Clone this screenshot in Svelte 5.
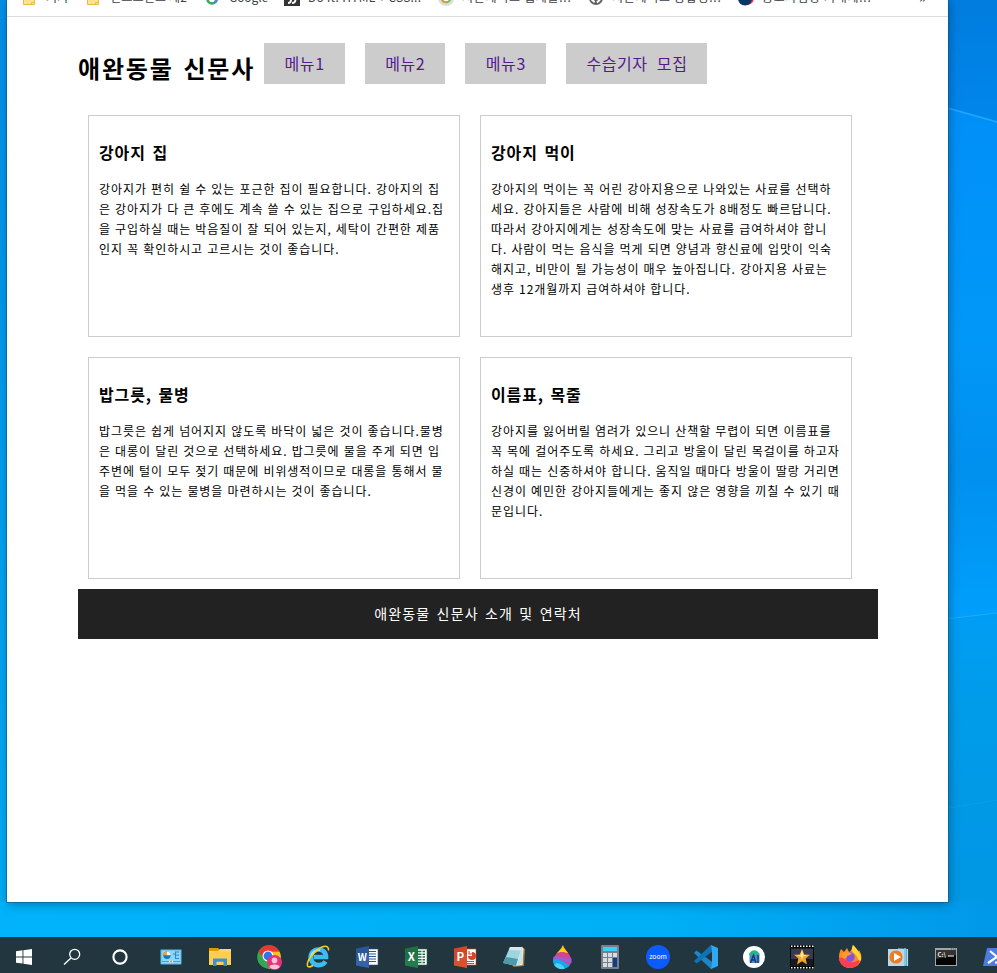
<script>
  const bookmarks = [
    { x: 22, icon: 'folder', text: '거기', w: 64, gap: 0 },
    { x: 86, icon: 'folder', text: '인스프린트 제2', w: 119, gap: 0.2 },
    { x: 205, icon: 'google', text: 'Google', w: 79, gap: -0.1 },
    { x: 284, icon: 'doit', text: 'Do it! HTML + CSS...', w: 154, gap: 0.25 },
    { x: 438, icon: 'ring', text: '시근제이스 웹제를...', w: 150, gap: 0.7 },
    { x: 588, icon: 'globe', text: '시근제이스 종합정...', w: 150, gap: 0.7 },
    { x: 738, icon: 'navy', text: '중고사업장 거래제...', w: 160, gap: 0.7 }
  ];
  const menus = ['메뉴1', '메뉴2', '메뉴3', '수습기자 모집'];
  const cards = [
    {
      title: '강아지 집',
      lines: [
        '강아지가 편히 쉴 수 있는 포근한 집이 필요합니다. 강아지의 집',
        '은 강아지가 다 큰 후에도 계속 쓸 수 있는 집으로 구입하세요.집',
        '을 구입하실 때는 박음질이 잘 되어 있는지, 세탁이 간편한 제품',
        '인지 꼭 확인하시고 고르시는 것이 좋습니다.'
      ]
    },
    {
      title: '강아지 먹이',
      lines: [
        '강아지의 먹이는 꼭 어린 강아지용으로 나와있는 사료를 선택하',
        '세요. 강아지들은 사람에 비해 성장속도가 8배정도 빠르답니다.',
        '따라서 강아지에게는 성장속도에 맞는 사료를 급여하셔야 합니',
        '다. 사람이 먹는 음식을 먹게 되면 양념과 향신료에 입맛이 익숙',
        '해지고, 비만이 될 가능성이 매우 높아집니다. 강아지용 사료는',
        '생후 12개월까지 급여하셔야 합니다.'
      ]
    },
    {
      title: '밥그릇, 물병',
      lines: [
        '밥그릇은 쉽게 넘어지지 않도록 바닥이 넓은 것이 좋습니다.물병',
        '은 대롱이 달린 것으로 선택하세요. 밥그릇에 물을 주게 되면 입',
        '주변에 털이 모두 젖기 때문에 비위생적이므로 대롱을 통해서 물',
        '을 먹을 수 있는 물병을 마련하시는 것이 좋습니다.'
      ]
    },
    {
      title: '이름표, 목줄',
      lines: [
        '강아지를 잃어버릴 염려가 있으니 산책할 무렵이 되면 이름표를',
        '꼭 목에 걸어주도록 하세요. 그리고 방울이 달린 목걸이를 하고자',
        '하실 때는 신중하셔야 합니다. 움직일 때마다 방울이 딸랑 거리면',
        '신경이 예민한 강아지들에게는 좋지 않은 영향을 끼칠 수 있기 때',
        '문입니다.'
      ]
    }
  ];
  const system = ['windows', 'search', 'cortana'];
  const wide = ['panel', 'explorer', 'chrome', 'ie', 'word', 'excel', 'ppt', 'notepad'];
  const narrow = ['paint', 'calc', 'zoom', 'vscode', 'android', 'movie', 'firefox', 'player', 'cmd', 'powershell'];
</script>

{#snippet office(color, dark, letter)}
  <rect x="0" y="-8" width="11" height="16" fill="#fff" stroke={color} stroke-width=".6" />
  {#if letter === 'W'}
    <path d="M1-5.5H9M1-3H9M1-.5H9M1 2H9M1 4.5H9" stroke={color} stroke-width="1.1" />
  {:else if letter === 'X'}
    <path d="M1-5.5H9M1-2.8H9M1 0H9M1 2.8H9M1 5.5H9" stroke={color} stroke-width="1.5" stroke-dasharray="4.5 1" />
  {:else}
    <path d="M3-1a4 4 0 1 0 4-4V-1z" fill={color} />
    <path d="M4-6v3H8.5M1 4.5H9M1 6.5H9" fill="none" stroke={color} stroke-width="1.1" />
  {/if}
  <path d="M-11-8.5L2-11V11L-11 8.5z" fill={color} />
  <path d="M-11 3L2-3V11L-11 8.5z" fill={dark} opacity=".3" />
  <text x="-4.7" y="4" text-anchor="middle" font-size={letter === 'W' ? 10 : 11.5} font-weight="700" fill="#fff">{letter}</text>
{/snippet}

{#snippet glyph(name)}
  <svg class="glyph" width="30" height="36" viewBox="-15 -20 30 36">
    {#if name === 'windows'}
      <path d="M-8-5.7L-1.5-6.7V-.6H-8zM-.6-6.8L8-8V-.6H-.6zM-8 .4H-1.5V6.6L-8 5.7zM-.6 .4H8V8L-.6 6.8z" fill="#fff" />
    {:else if name === 'search'}
      <circle cx="2.7" cy="-2.7" r="5" fill="none" stroke="#fff" stroke-width="1.3" />
      <path d="M-1 1L-8 7.5" stroke="#fff" stroke-width="1.4" />
    {:else if name === 'cortana'}
      <circle r="6.6" fill="none" stroke="#fff" stroke-width="2.1" />
    {:else if name === 'panel'}
      <rect x="-10.5" y="-7.5" width="21" height="15" rx=".8" fill="#5cb8ea" />
      <rect x="-9.5" y="-6.5" width="19" height="13" fill="#8fd5f4" />
      <circle cx="-4" cy="-1.7" r="3.7" fill="#1478bd" />
      <path d="M-4-1.7V-5.4A3.7 3.7 0 0 1-.3-1.7z" fill="#fff" />
      <path d="M-4-1.7H-7.7A3.7 3.7 0 0 1-4-5.4z" fill="#f5a623" />
      <path d="M2-3H4.5M4.5-5.5V2M4.5-5H8M4.5-1.8H8M4.5 1.5H8" fill="none" stroke="#2b8ad2" />
      <path d="M-9 4.5H9" stroke="#4aa2d9" />
      <path d="M-2 4.5H2" stroke="#fff" stroke-width="1.5" />
      <circle cx="0" cy="4.5" r="1.1" fill="#ee9b15" />
    {:else if name === 'explorer'}
      <path d="M-11-9H-2L0-7V-3H-11z" fill="#df9b00" />
      <path d="M-11-6H-2L0-8H11V8H-11z" fill="#ffd764" />
      <path d="M-11-5.5H11V8H-11z" fill="#ffce50" />
      <path d="M-7 9V1.5H7V9H3.5V4.7H-3.5V9z" fill="#3b91d7" />
    {:else if name === 'chrome'}
      <circle r="11.8" fill="#32a852" />
      <path d="M0-5.5H10.4A11.8 11.8 0 0 1-.5 11.8L5 2z" fill="#fbc116" />
      <path d="M-10.4-5.6A11.8 11.8 0 0 1 10.5-5.5H0L-5 2z" fill="#e8392f" />
      <circle cx="-1" cy="-1" r="5.5" fill="#fff" />
      <circle cx="-1" cy="-1" r="4.4" fill="#2f75e8" />
      <circle cx="5.5" cy="5.5" r="7.5" fill="#e8317b" />
      <circle cx="5.5" cy="3.4" r="2.8" fill="#fbc3d8" />
      <path d="M.3 10C1.5 6.8 9.5 6.8 10.8 10A7.3 7.3 0 0 1 .3 10" fill="#fbc3d8" />
    {:else if name === 'ie'}
      <path d="M7.5 4.5C4.5 9.2-2.5 9.3-5.8 5C-8.8 .8-7.4-5-2.2-7C3.5-9 8 -4.8 8 0H-4.5" fill="none" stroke="#3dbcf0" stroke-width="4.6" />
      <path d="M-7-1C-6-5-2-7.6 2-6.8" fill="none" stroke="#a9e9fc" stroke-width="1.8" />
      <path d="M10.5-6.5C11-9.5 9-12 4-10C-3-7-12 4-10.5 9C-9.8 10.5-7.5 10-5 8.5" fill="none" stroke="#f5ce24" stroke-width="1.6" />
    {:else if name === 'word'}
      {@render office('#2b5797', '#4e82cf', 'W')}
    {:else if name === 'excel'}
      {@render office('#1e7145', '#33945c', 'X')}
    {:else if name === 'ppt'}
      {@render office('#d24726', '#f06a45', 'P')}
    {:else if name === 'notepad'}
      <path d="M8-10L11-8L10 9L-1 10z" fill="#9e7b45" />
      <path d="M8-10.5L9.5-8L8.5 8L-1 9z" fill="#f2eee0" />
      <path d="M-4-10L8-10L2 9L-11 6z" fill="#9ed5df" />
      <path d="M-8 0L4 2L2 9L-11 6z" fill="#4d9aa8" />
      <path d="M-4-10L8-10L7-6.5L-5-7z" fill="#d6e8e9" />
      <path d="M8-9L9 6L2 9z" fill="#c4e2e4" />
    {:else if name === 'paint'}
      <path d="M1-12C2-8 9.5-2 9.5 4A9.3 8 0 0 1-9 4C-9-2 0-7 1-12" fill="#d44591" />
      <path d="M1-12C1-9 4-7 6-4C1-5-2-6-6-3C-3-6 0-9 1-12" fill="#ffd400" />
      <path d="M-8.5 0C-4-3 3 3 9.4 1V6C3 6-3-1-9 4z" fill="#9b5ed0" />
      <path d="M-9 3C-4-1 1 6 8 8A9.3 8.3 0 0 1-9 4z" fill="#16a7ee" />
      <path d="M-8 8C-4 4 0 7 3 11.6A9 9 0 0 1-8 8" fill="#49d3fa" />
    {:else if name === 'calc'}
      <rect x="-9" y="-12" width="18" height="24" rx=".8" fill="#75808a" />
      <rect x="-7" y="-10" width="14" height="4" fill="#42cdf5" />
      <g fill="#d8dce0">
        <rect x="-7" y="-4" width="4" height="4" /><rect x="-2" y="-4" width="4" height="4" /><rect x="3" y="-4" width="4" height="4" />
        <rect x="-7" y="1" width="4" height="4" /><rect x="-2" y="1" width="4" height="4" />
        <rect x="-7" y="6" width="4" height="4" /><rect x="-2" y="6" width="4" height="4" />
      </g>
      <rect x="3" y="1" width="4" height="9" fill="#123f81" />
    {:else if name === 'zoom'}
      <circle r="12" fill="#0b5cff" />
      <text y="1.8" text-anchor="middle" font-size="6.8" font-weight="400" fill="#fff">zoom</text>
    {:else if name === 'vscode'}
      <path d="M-9.5-6.5L7 5.5V11L5 12L-12-4z" fill="#1b87cb" />
      <path d="M-12 4L5-12L7-6L-9.5 6.5z" fill="#0d73b8" />
      <path d="M5-12L12-9V9L5 12L6 6V-6z" fill="#32a9ee" />
    {:else if name === 'android'}
      <circle r="11" fill="#fff" />
      <rect x="-4.5" y="-4" width="10" height="10" rx="1" fill="#4489e0" />
      <path d="M-5-2C-4-8 4-8 5-3L2-2H-5z" fill="#28b887" />
      <path d="M-3.5 6L-.5-2L2 6M-2.5 3H1M4-2V6" fill="none" stroke="#153b61" stroke-width="1.3" />
    {:else if name === 'movie'}
      <rect x="-12" y="-12" width="24" height="24" fill="#080808" />
      <path d="M-11-10.8H12M-11 10.8H12" stroke="#fff" stroke-width="1.5" stroke-dasharray="1.5 1.5" />
      <rect x="-11" y="-8.5" width="22" height="17" fill="#383b50" />
      <path d="M-11 2H11V8.5H-11z" fill="#171820" />
      <path d="M0-8L2.2-2.6L8-2.3L3.6 1.5L5 7.5L0 4.3L-5 7.5L-3.6 1.5L-8-2.3L-2.2-2.6z" fill="#f3a728" />
      <path d="M0-7L1.7-2L6-1.8L1-.5L0 3L-1-.5L-6-1.8L-1.7-2z" fill="#ffe28c" />
    {:else if name === 'firefox'}
      <path d="M-9-8L-6-5L-3-9L-1-5C2-6 2-10 3-12C6-9 7-7 8-5L9-7C15 2 9 11 0 11C-9 11-14 2-9-8" fill="#ff8b21" />
      <path d="M-11 1C-7-1 -4 5 2 5C6 5 8 3 10 3C9 8 5 11 0 11C-6 11-10 7-11 1" fill="#ff3d55" />
      <path d="M3-12C6-9 12-3 11 3C9 6 8 0 5-3C2-5 1-8 3-12" fill="#ffd83e" />
      <circle cx="0" cy="0" r="4.7" fill="#8054df" />
      <path d="M-8-4C-4-4-2-6 2-3L-3-1C-3 2-6 2-8-1z" fill="#ff9b28" />
    {:else if name === 'player'}
      <path d="M0-9L10-8V9L0 8z" fill="#5fa8c9" />
      <path d="M7-9L7 9M9.5-8V9" stroke="#a4dff1" stroke-width="1.2" />
      <rect x="-10" y="-8" width="16" height="17" fill="#b7d9e8" />
      <circle cx="-2" cy="0" r="6.6" fill="#f07b21" />
      <path d="M-4-4L3 0L-4 4z" fill="#fff" />
    {:else if name === 'cmd'}
      <rect x="-11" y="-9" width="22" height="18" fill="#a2a6a8" />
      <rect x="-10" y="-7" width="20" height="15" fill="#050505" />
      <path d="M-10-7H10V-2C3-1-3 1-10 2z" fill="#333" />
      <text x="-8.5" y="-.5" font-size="6" font-weight="700" fill="#eee">C:\</text>
      <path d="M2-1H8" stroke="#fff" />
      <path d="M5-8H10" stroke="#555" stroke-dasharray="1 1" />
    {:else if name === 'powershell'}
      <path d="M-7-9H15V9H-11z" fill="#4d7be0" />
      <path d="M-4-6L3 0L-6 6" fill="none" stroke="#fff" stroke-width="2.2" />
      <path d="M1 5.5H9" stroke="#fff" stroke-width="2" />
    {/if}
  </svg>
{/snippet}

<div class="desktop">
  <svg class="rays" width="60" height="937" viewBox="937 0 60 937">
    <path d="M937 105L997 122V0H937z" fill="#006fd0" opacity=".28" />
    <path d="M937 105L997 122" stroke="#32b5ff" stroke-width="1.8" opacity=".65" />
    <path d="M937 620L997 613V902H937z" fill="#008acb" opacity=".15" />
    <path d="M937 620L997 613" stroke="#35bbff" stroke-width="1.2" opacity=".55" />
    <path d="M937 810L997 800" stroke="#15a9f6" opacity=".4" />
  </svg>
  <div class="window">
    <div class="bookmarks">
      {#each bookmarks as b}
        <div class="bookmark" style="width: {b.w}px">
          <svg width="16" height="16" viewBox="0 0 16 16">
            {#if b.icon === 'folder'}
              <path d="M1.5 3H7L9 5H12.5V14.5H1.5z" fill="#ffe48d" stroke="#e7bd4a" />
              <path d="M9.5 14.5V12.5H12.5" fill="none" stroke="#e7bd4a" />
            {:else if b.icon === 'google'}
              <circle cx="7" cy="9" r="4.5" fill="none" stroke="#34a853" stroke-width="2.6" />
              <path d="M10 12.4A4.5 4.5 0 0 0 11.5 9" fill="none" stroke="#4285f4" stroke-width="2.6" />
            {:else if b.icon === 'doit'}
              <rect width="16" height="16" fill="#333338" />
              <path d="M4 13C8 13 6 10 8 8M8 13C12 13 12 9 10 8" fill="none" stroke="#fff" stroke-width="2" />
            {:else if b.icon === 'ring'}
              <circle cx="8" cy="8" r="8" fill="#ddd" />
              <circle cx="8" cy="8" r="4.3" fill="#fff" stroke="#7bbd45" stroke-width="2" />
              <path d="M4.5 10.5A4.3 4.3 0 0 0 8 12.3" fill="none" stroke="#f19a29" stroke-width="2" />
            {:else if b.icon === 'globe'}
              <circle cx="8" cy="8" r="7" fill="#5f6368" />
              <path d="M3.5 9.5L6 11.5V12.5M9 12.5L12 9.5" fill="none" stroke="#fff" stroke-width="1.8" />
            {:else}
              <circle cx="9" cy="8" r="7" fill="#e6384a" />
              <circle cx="7" cy="8.5" r="7" fill="#063766" />
            {/if}
          </svg>
          <span style="letter-spacing: {b.gap}px">{b.text}</span>
        </div>
      {/each}
      <span class="more">»</span>
    </div>
    <div class="page">
      <header>
        <h1>애완동물 신문사</h1>
        <nav>
          {#each menus as m}<a href="#menu">{m}</a>{/each}
        </nav>
      </header>
      <main>
        {#each cards as card}
          <section>
            <h2>{card.title}</h2>
            <p>{#each card.lines as line}<span>{line}</span>{/each}</p>
          </section>
        {/each}
      </main>
      <footer>애완동물 신문사 소개 및 연락처</footer>
    </div>
  </div>
  <div class="taskbar">
    <div class="group system">{#each system as name}<div class="cell">{@render glyph(name)}</div>{/each}</div>
    <div class="group wide">{#each wide as name}<div class="cell">{@render glyph(name)}</div>{/each}</div>
    <div class="group">{#each narrow as name}<div class="cell">{@render glyph(name)}</div>{/each}</div>
  </div>
</div>

<style>
  :global(body) { overflow: hidden; }
  .desktop {
    position: relative;
    width: 997px;
    height: 973px;
    overflow: hidden;
    display: flex;
    flex-direction: column;
    font-family: "Noto Sans CJK KR", "Noto Sans", sans-serif;
    background:
      linear-gradient(90deg, #00b3fa 0, #00b0f7 65%, #0098e8 100%) 0 902px / 997px 35px no-repeat,
      linear-gradient(#0090e8, #00aef5) 0 0 / 8px 902px no-repeat,
      linear-gradient(#0083e4, #0090f8 13%, #0098f8 35%, #0090ee 48%, #00a0fc 64%, #009ff0 72%, #0098e6);
  }
  .rays { position: absolute; right: 0; top: 0; }
  .window {
    position: relative;
    box-sizing: border-box;
    margin-left: 7px;
    width: 941px;
    height: 902px;
    flex: none;
    background: #fff;
    box-shadow: 0 0 0 1px rgba(20, 80, 120, .5), 1px 2px 10px rgba(0, 30, 70, .42);
  }
  .bookmarks {
    box-sizing: border-box;
    display: flex;
    height: 17px;
    padding-left: 15px;
    border-bottom: 1px solid #dadce0;
    overflow: hidden;
    font-size: 12px;
    line-height: 18px;
    color: #3c4043;
  }
  .bookmark {
    display: flex;
    gap: 8px;
    flex: none;
    height: 16px;
    margin-top: -10px;
    white-space: nowrap;
  }
  .bookmark svg { flex: none; }
  .bookmark span { margin-top: -2px; }
  .more { margin: -13px 0 0 21px; font-size: 16px; }
  .page { width: 800px; margin: 0 0 0 71px; }
  header { display: flex; height: 88px; }
  h1 {
    margin: 33px 0 0;
    width: 186px;
    font-size: 24px;
    line-height: 36px;
    font-weight: 700;
    letter-spacing: 1.8px;
    word-spacing: 2.7px;
    color: #000;
    white-space: nowrap;
  }
  nav { display: flex; gap: 20px; margin-top: 26px; height: 41px; }
  a {
    box-sizing: border-box;
    padding: 0 20px 0 20.5px;
    height: 41px;
    background: #ccc;
    color: #551a8b;
    text-decoration: none;
    font-size: 16px;
    line-height: 41px;
    letter-spacing: .6px;
    word-spacing: 5px;
    white-space: nowrap;
  }
  main { display: grid; grid-template-columns: 372px 372px; gap: 20px; padding: 10px 10px; }
  section { box-sizing: border-box; height: 222px; padding: 26px 10px 0; border: 1px solid #ccc; }
  h2 {
    margin: 0 0 17px;
    font-size: 16px;
    line-height: 20px;
    font-weight: 700;
    letter-spacing: .9px;
    word-spacing: 2px;
    color: #000;
  }
  p { margin: 0; font-size: 12px; line-height: 20px; letter-spacing: .94px; word-spacing: .5px; color: #000; }
  p span { display: block; white-space: nowrap; }
  footer {
    height: 50px;
    background: #222;
    color: #fff;
    text-align: center;
    font-size: 14px;
    line-height: 49px;
    letter-spacing: 1.15px;
    word-spacing: 2px;
  }
  .taskbar {
    position: relative;
    display: flex;
    width: 1040px;
    height: 36px;
    margin-top: 35px;
    flex: none;
    background: #22363f;
  }
  .group { display: flex; flex: none; }
  .system { margin-right: 2.5px; }
  .wide { margin-right: -.5px; }
  .cell { display: flex; justify-content: center; width: 48px; flex: none; }
  .wide .cell { width: 49px; }
  .glyph { display: block; }
</style>
